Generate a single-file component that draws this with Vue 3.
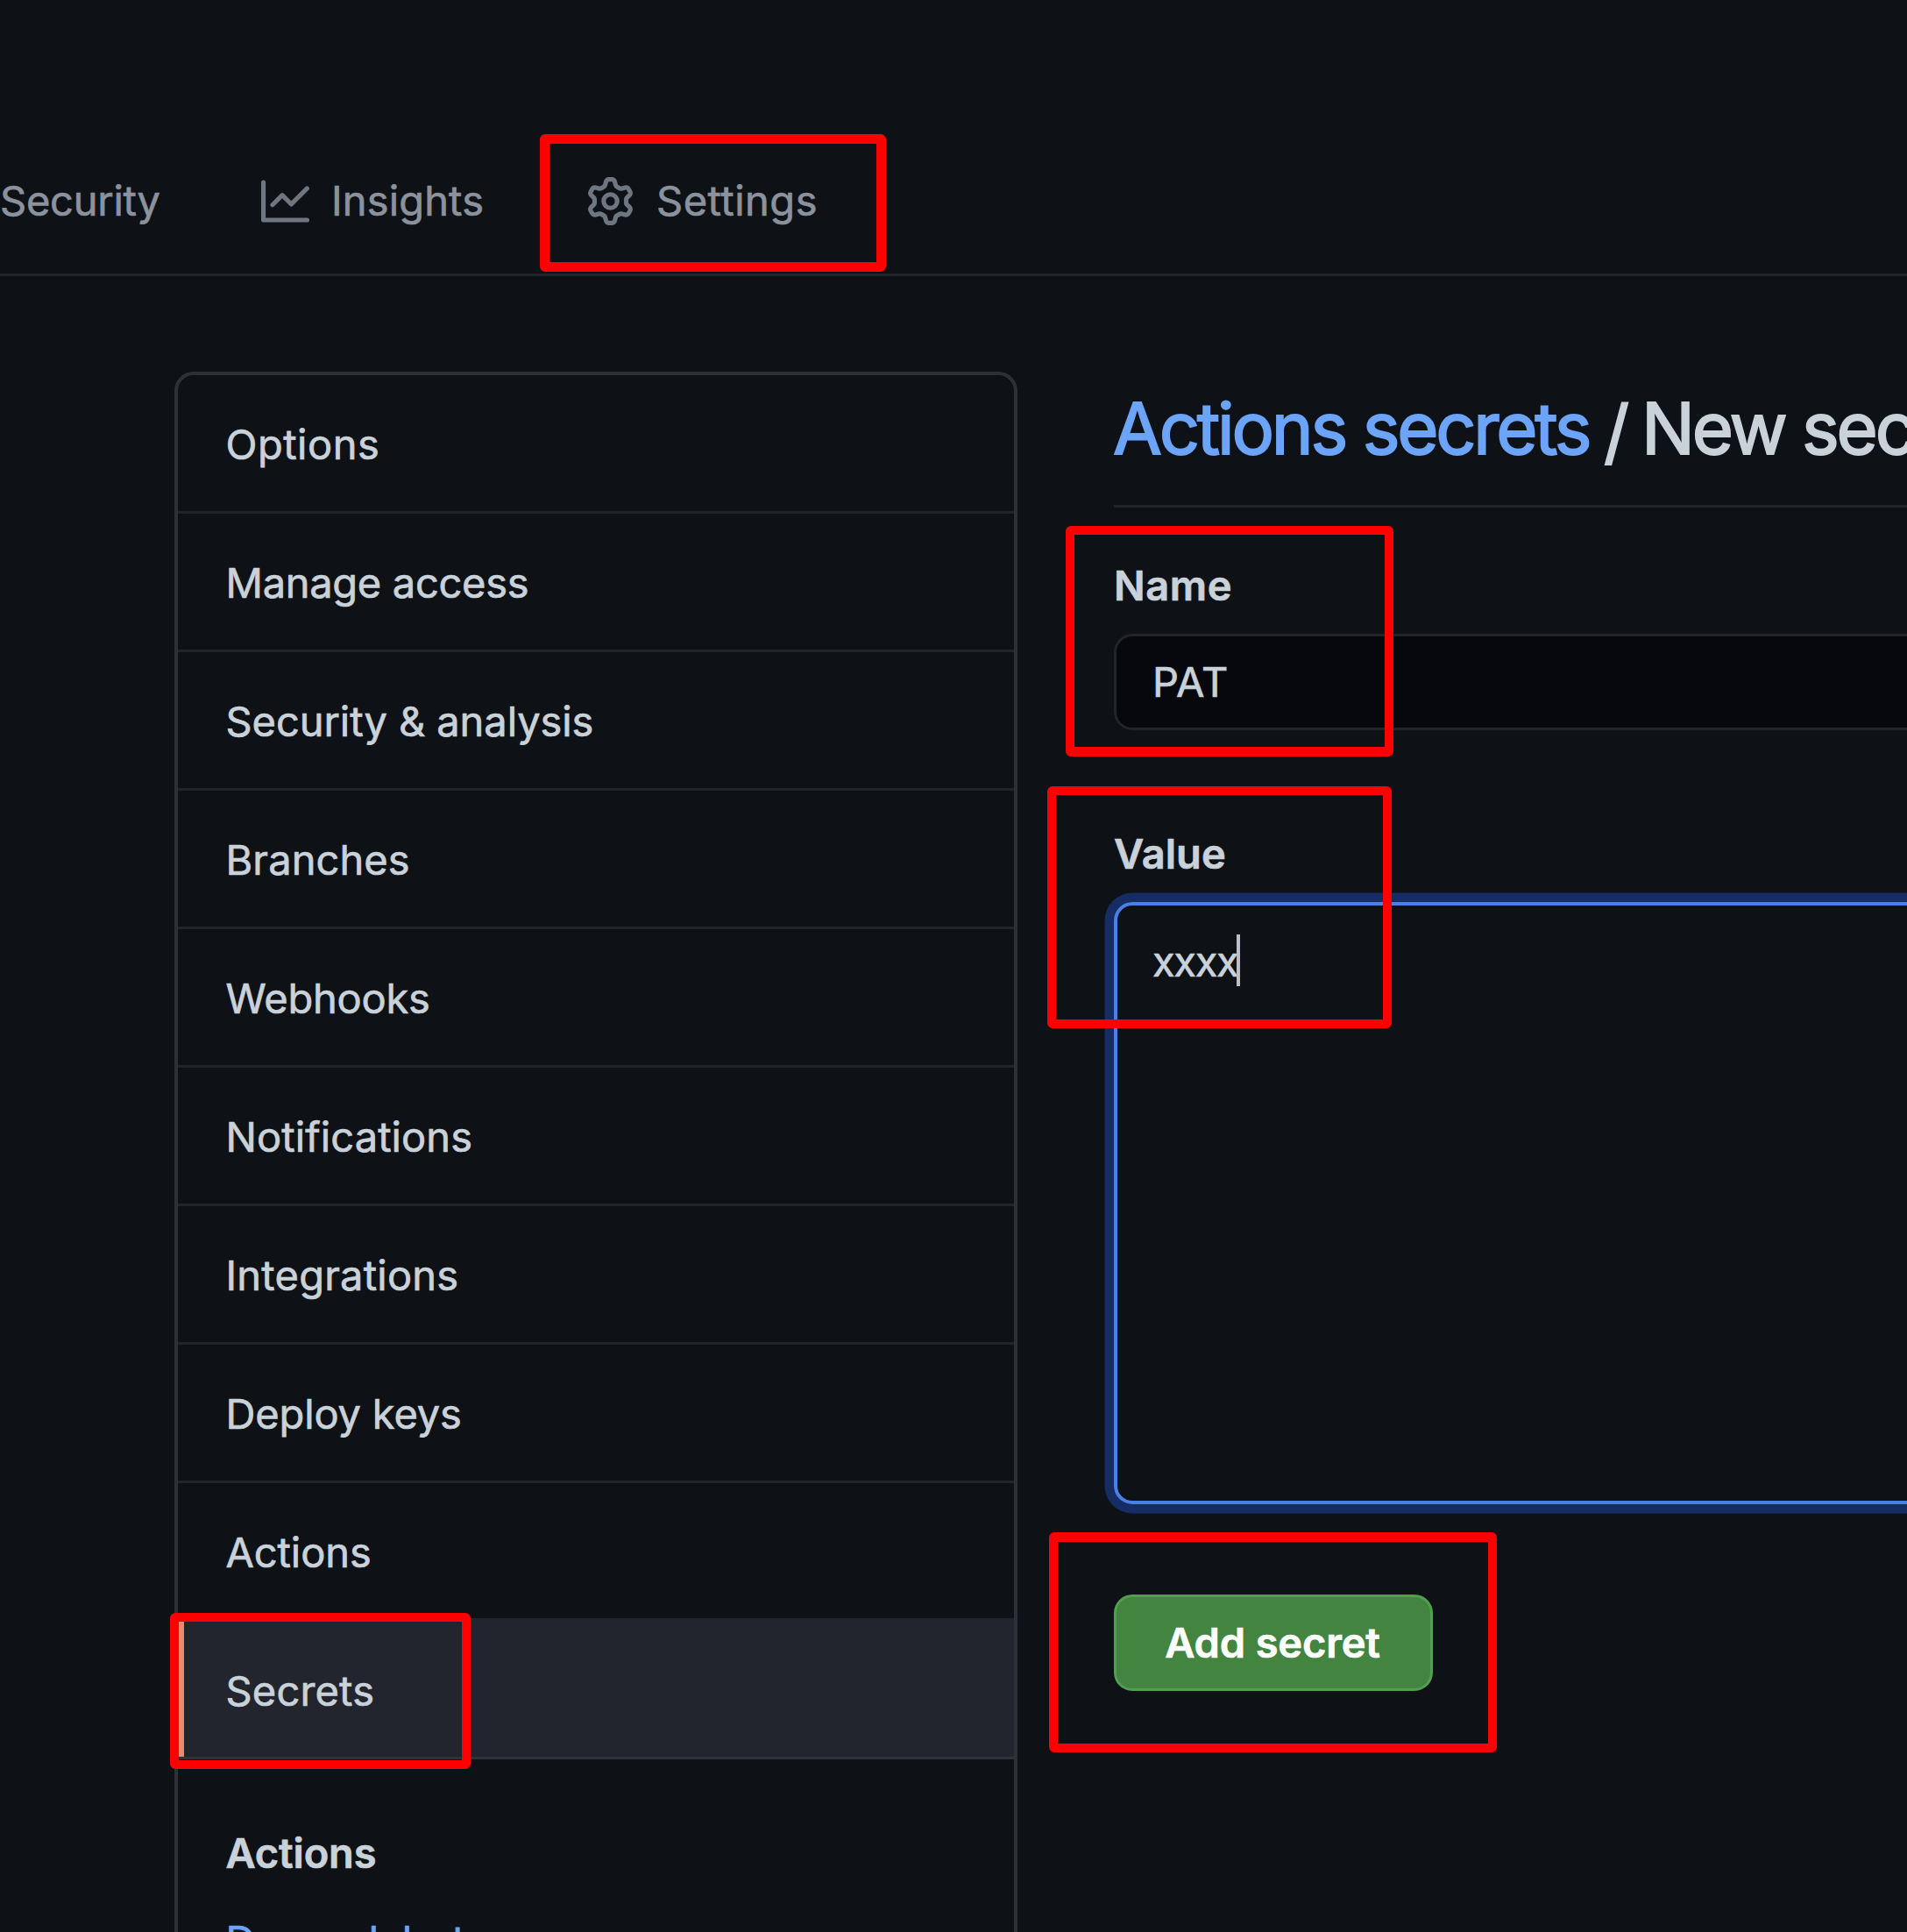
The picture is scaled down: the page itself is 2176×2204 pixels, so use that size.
<script setup>
const menu = [
  { label: 'Options', track: 0.5 },
  { label: 'Manage access', track: -0.3 },
  { label: 'Security & analysis', track: -0.06 },
  { label: 'Branches', track: 0.1 },
  { label: 'Webhooks', track: -0.22 },
  { label: 'Notifications', track: 0.1 },
  { label: 'Integrations', track: 0.23 },
  { label: 'Deploy keys', track: -0.15 },
  { label: 'Actions', track: -0.1 },
  { label: 'Secrets', track: 0.18, selected: true },
]
</script>

<template>
  <div class="page">
    <nav class="tabs">
      <a class="tab security">Security</a>
      <a class="tab insights">
        <svg class="icon" viewBox="0 0 16 16" aria-hidden="true">
          <path fill-rule="evenodd" d="M1.5 1.75a.75.75 0 00-1.5 0v12.5c0 .414.336.75.75.75h14.5a.75.75 0 000-1.5H1.5V1.75zm14.28 2.53a.75.75 0 00-1.06-1.06L10 7.94 7.53 5.47a.75.75 0 00-1.06 0L3.22 8.72a.75.75 0 001.06 1.06L7 7.06l2.47 2.47a.75.75 0 001.06 0l5.25-5.25z" />
        </svg>
        <span>Insights</span>
      </a>
      <a class="tab settings">
        <svg class="icon" viewBox="0 0 16 16" aria-hidden="true">
          <path fill-rule="evenodd" d="M7.429 1.525a6.593 6.593 0 011.142 0c.036.003.108.036.137.146l.289 1.105c.147.56.55.967.997 1.189.174.086.341.183.501.29.417.278.97.423 1.53.27l1.102-.303c.11-.03.175.016.195.046.219.31.41.641.573.989.014.031.022.11-.059.19l-.815.806c-.411.406-.562.957-.53 1.456a4.588 4.588 0 010 .582c-.032.499.119 1.05.53 1.456l.815.806c.08.08.073.159.059.19a6.494 6.494 0 01-.573.99c-.02.029-.086.074-.195.045l-1.103-.303c-.559-.153-1.112-.008-1.529.27-.16.107-.327.204-.5.29-.449.222-.851.628-.998 1.189l-.289 1.105c-.029.11-.101.143-.137.146a6.613 6.613 0 01-1.142 0c-.036-.003-.108-.037-.137-.146l-.289-1.105c-.147-.56-.55-.967-.997-1.189a4.502 4.502 0 01-.501-.29c-.417-.278-.97-.423-1.53-.27l-1.102.303c-.11.03-.175-.016-.195-.046a6.492 6.492 0 01-.573-.989c-.014-.031-.022-.11.059-.19l.815-.806c.411-.406.562-.957.53-1.456a4.587 4.587 0 010-.582c.032-.499-.119-1.05-.53-1.456l-.815-.806c-.08-.08-.073-.159-.059-.19a6.44 6.44 0 01.573-.99c.02-.029.086-.075.195-.045l1.103.303c.559.153 1.112.008 1.529-.27.16-.107.327-.204.5-.29.449-.222.851-.628.998-1.189l.289-1.105c.029-.11.101-.143.137-.146zM8 0c-.236 0-.47.01-.701.03-.743.065-1.29.615-1.458 1.261l-.29 1.106c-.017.066-.078.158-.211.224a5.994 5.994 0 00-.668.386c-.123.082-.233.09-.3.071L3.27 2.776c-.644-.177-1.392.02-1.82.63a7.977 7.977 0 00-.704 1.217c-.315.675-.111 1.422.363 1.891l.815.806c.05.048.098.147.088.294a6.084 6.084 0 000 .772c.01.147-.038.246-.088.294l-.815.806c-.474.469-.678 1.216-.363 1.891.2.428.436.835.704 1.218.428.609 1.176.806 1.82.63l1.103-.303c.066-.019.176-.011.299.071.213.143.436.272.668.386.133.066.194.158.212.224l.289 1.106c.169.646.715 1.196 1.458 1.26a8.094 8.094 0 001.402 0c.743-.064 1.29-.614 1.458-1.26l.29-1.106c.017-.066.078-.158.211-.224a5.98 5.98 0 00.668-.386c.123-.082.233-.09.3-.071l1.102.302c.644.177 1.392-.02 1.82-.63.268-.382.505-.789.704-1.217.315-.675.111-1.422-.364-1.891l-.814-.806c-.05-.048-.098-.147-.088-.294a6.1 6.1 0 000-.772c-.01-.147.039-.246.088-.294l.814-.806c.475-.469.679-1.216.364-1.891a7.992 7.992 0 00-.704-1.218c-.428-.609-1.176-.806-1.82-.63l-1.103.303c-.066.019-.176.011-.299-.071a5.991 5.991 0 00-.668-.386c-.133-.066-.194-.158-.212-.224L10.16 1.29C9.99.645 9.444.095 8.701.031A8.094 8.094 0 008 0zm1.5 8a1.5 1.5 0 11-3 0 1.5 1.5 0 013 0zM11 8a3 3 0 11-6 0 3 3 0 016 0z" />
        </svg>
        <span>Settings</span>
      </a>
    </nav>

    <div class="content">
      <aside class="menu">
        <a
          v-for="item in menu"
          :key="item.label"
          class="item"
          :class="{ selected: item.selected }"
          :style="{ letterSpacing: item.track + 'px' }"
        >{{ item.label }}</a>
        <div class="submenu">
          <strong class="sub-current">Actions</strong>
          <a class="sub-link">Dependabot</a>
        </div>
      </aside>

      <main class="main">
        <h2 class="heading"><a class="crumb">Actions secrets</a><span class="slash">/</span><span>New secret</span></h2>
        <label class="label name">Name</label>
        <div class="input">PAT</div>
        <label class="label value">Value</label>
        <div class="textarea"><span>xxxx</span><i class="caret"></i></div>
        <button class="button">Add secret</button>
      </main>
    </div>

    <div class="mark mark-settings"></div>
    <div class="mark mark-name"></div>
    <div class="mark mark-value"></div>
    <div class="mark mark-button"></div>
    <div class="mark mark-secrets"></div>
  </div>
</template>

<style>
html,
body {
  background: #0e1116;
}
</style>

<style scoped>
.page {
  position: relative;
  width: 2176px;
  height: 2204px;
  overflow: hidden;
  background: #0e1116;
  color: #c9d1d9;
  font: 400 47px/72px Inter, "Liberation Sans", sans-serif;
  -webkit-text-stroke: 0.7px currentColor;
}
* {
  box-sizing: border-box;
}
.tabs {
  display: flex;
  height: 315px;
  padding-top: 193px;
  border-bottom: 3px solid #212529;
  color: #8b929d;
}
.tab {
  display: flex;
  align-items: center;
  height: 72px;
  white-space: nowrap;
}
.security {
  width: 298px;
  letter-spacing: -0.25px;
}
.insights {
  width: 371px;
  letter-spacing: 0.15px;
}
.settings {
  letter-spacing: 0.5px;
}
.icon {
  width: 55px;
  height: 55px;
  margin-right: 25px;
  fill: #6e7681;
}
.content {
  display: flex;
  align-items: flex-start;
  height: 1889px;
}
.menu {
  width: 962px;
  height: 1900px;
  margin: 109px 0 0 199px;
  border: 4px solid #2d3136;
  border-radius: 22px 22px 0 0;
  flex: none;
}
.item {
  display: flex;
  align-items: center;
  height: 158px;
  padding: 2px 0 0 54.5px;
  border-bottom: 3px solid #212529;
}
.item:has(+ .selected) {
  height: 157px;
  padding-top: 3px;
  border-bottom-color: #22252e;
}
.selected {
  position: relative;
  padding-top: 4px;
  background: #22252e;
  border-bottom-color: #30343a;
}
.selected::before {
  content: "";
  position: absolute;
  left: 0;
  top: -3px;
  bottom: 0;
  width: 7px;
  background: #ea8a6e;
}
.submenu {
  display: flex;
  flex-direction: column;
  padding: 71px 0 0 54.5px;
}
.sub-current {
  font-weight: 600;
  letter-spacing: -0.15px;
}
.sub-link {
  margin-top: 28px;
  color: #6ba4f8;
  letter-spacing: 0.1px;
}
.main {
  flex: none;
  width: 1100px;
  margin-left: 110px;
  padding-top: 113px;
}
.heading {
  display: flex;
  height: 151px;
  margin: 0;
  border-bottom: 3px solid #212529;
  font-size: 81px;
  line-height: 122px;
  font-weight: 400;
  letter-spacing: -3.2px;
  white-space: nowrap;
  -webkit-text-stroke-width: 1.8px;
}
.crumb {
  width: 560px;
  margin-left: -1px;
  color: #6ba4f8;
}
.slash {
  width: 43px;
  padding-top: 3px;
}
.label {
  display: block;
  height: 72px;
  font-weight: 600;
}
.name {
  margin-top: 52.5px;
  letter-spacing: 0.6px;
}
.value {
  margin-top: 105px;
  letter-spacing: 0.1px;
}
.input {
  height: 110px;
  margin-top: 19.5px;
  padding-left: 41px;
  border: 3px solid #212529;
  border-radius: 21px;
  background: #06080d;
  line-height: 103px;
  letter-spacing: 0.5px;
}
.textarea {
  display: flex;
  height: 687px;
  margin-top: 19px;
  padding: 28px 40px;
  border: 4px solid #4980e8;
  border-radius: 21px;
  box-shadow: 0 0 0 10.5px #162c64;
  letter-spacing: -1.3px;
}
.caret {
  width: 4px;
  height: 59px;
  margin: 5px 0 0 -1px;
  background: #b9c0c8;
}
.button {
  display: block;
  width: 364px;
  height: 110px;
  margin-top: 103px;
  padding: 0 2px 0 0;
  border: 3px solid #51a04f;
  border-radius: 21px;
  background: #438440;
  color: #fff;
  font: 600 47px/104px Inter, "Liberation Sans", sans-serif;
  letter-spacing: -0.15px;
}
.mark {
  position: absolute;
  border: 10px solid #f00;
  border-radius: 6px;
}
.mark-settings {
  left: 616px;
  top: 153px;
  width: 395px;
  height: 157px;
  border-width: 11px;
}
.mark-name {
  left: 1216px;
  top: 600px;
  width: 374px;
  height: 263px;
  border-bottom-width: 11px;
}
.mark-value {
  left: 1195px;
  top: 897px;
  width: 393px;
  height: 276px;
}
.mark-button {
  left: 1197px;
  top: 1748px;
  width: 511px;
  height: 251px;
  border-top-width: 11px;
}
.mark-secrets {
  left: 194px;
  top: 1840px;
  width: 343px;
  height: 178px;
}
</style>
